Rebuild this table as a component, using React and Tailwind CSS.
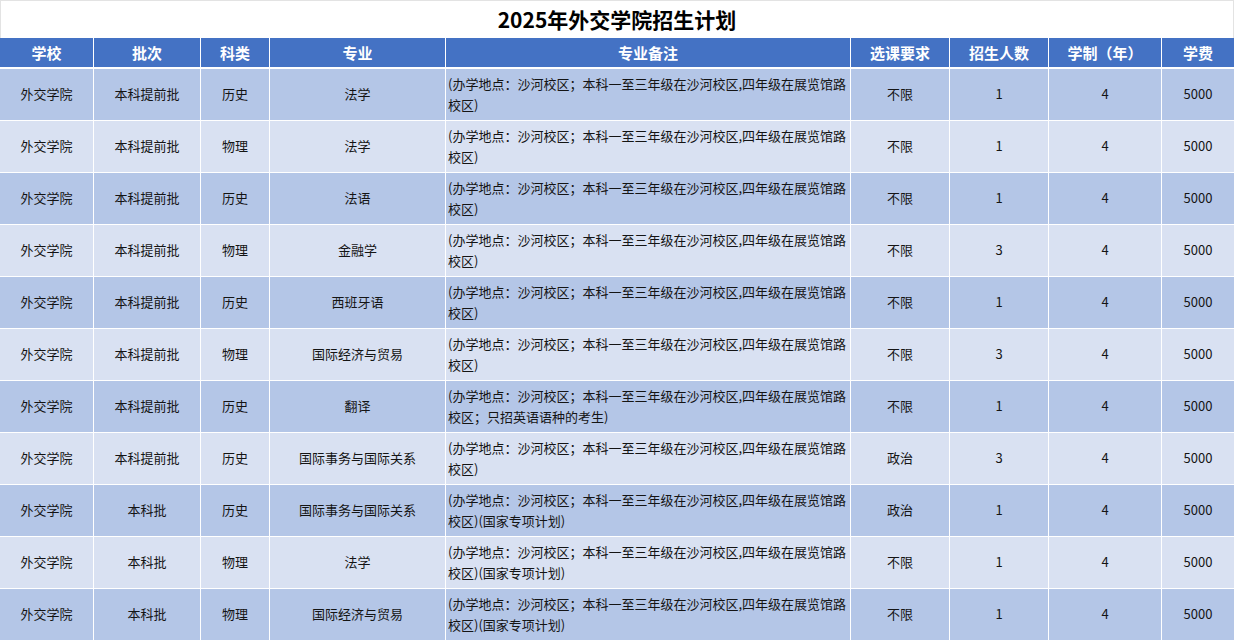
import React from "react";

const cols = "grid grid-cols-[93px_106px_68px_175px_404px_98px_98px_112px_72px] gap-px";

const headers = ["学校", "批次", "科类", "专业", "专业备注", "选课要求", "招生人数", "学制（年）", "学费"];

const NOTE = "(办学地点：沙河校区；本科一至三年级在沙河校区,四年级在展览馆路校区)";
const NOTE_EN = "(办学地点：沙河校区；本科一至三年级在沙河校区,四年级在展览馆路校区；只招英语语种的考生)";
const NOTE_GJ = "(办学地点：沙河校区；本科一至三年级在沙河校区,四年级在展览馆路校区)(国家专项计划)";

const rows = [
  ["外交学院", "本科提前批", "历史", "法学", NOTE, "不限", "1", "4", "5000"],
  ["外交学院", "本科提前批", "物理", "法学", NOTE, "不限", "1", "4", "5000"],
  ["外交学院", "本科提前批", "历史", "法语", NOTE, "不限", "1", "4", "5000"],
  ["外交学院", "本科提前批", "物理", "金融学", NOTE, "不限", "3", "4", "5000"],
  ["外交学院", "本科提前批", "历史", "西班牙语", NOTE, "不限", "1", "4", "5000"],
  ["外交学院", "本科提前批", "物理", "国际经济与贸易", NOTE, "不限", "3", "4", "5000"],
  ["外交学院", "本科提前批", "历史", "翻译", NOTE_EN, "不限", "1", "4", "5000"],
  ["外交学院", "本科提前批", "历史", "国际事务与国际关系", NOTE, "政治", "3", "4", "5000"],
  ["外交学院", "本科批", "历史", "国际事务与国际关系", NOTE_GJ, "政治", "1", "4", "5000"],
  ["外交学院", "本科批", "物理", "法学", NOTE_GJ, "不限", "1", "4", "5000"],
  ["外交学院", "本科批", "物理", "国际经济与贸易", NOTE_GJ, "不限", "1", "4", "5000"],
];

export default function App() {
  return (
    <div className="w-[1234px] h-[641px] overflow-hidden bg-white font-['Noto_Sans_CJK_SC',sans-serif] text-[#141414]">
      {/* TITLE */}
      <div className="h-[38px] border border-b-0 border-[#e3e3e3] flex items-center justify-center text-[21px] font-bold text-black">
        2025年外交学院招生计划
      </div>

      {/* HEADER */}
      <div className={`${cols} bg-white`}>
        {headers.map((h) => (
          <div
            key={h}
            className="h-[29px] pt-[2px] bg-[#4472C4] text-white font-bold text-[15px] flex items-center justify-center"
          >
            {h}
          </div>
        ))}
      </div>

      {/* BODY */}
      <div className={`${cols} mt-[2px] bg-white`}>
        {rows.map((r, i) => {
          const bg = i % 2 === 0 ? "bg-[#B4C6E7]" : "bg-[#D9E1F2]";
          return r.map((c, j) =>
            j === 4 ? (
              <div
                key={i + "-" + j}
                className={`${bg} h-[51px] pb-[2px] flex items-center px-[2px] text-[13px] leading-[21px]`}
              >
                {c}
              </div>
            ) : (
              <div
                key={i + "-" + j}
                className={`${bg} h-[51px] pb-px flex items-center justify-center text-[13px]`}
              >
                {c}
              </div>
            )
          );
        })}
      </div>
    </div>
  );
}
